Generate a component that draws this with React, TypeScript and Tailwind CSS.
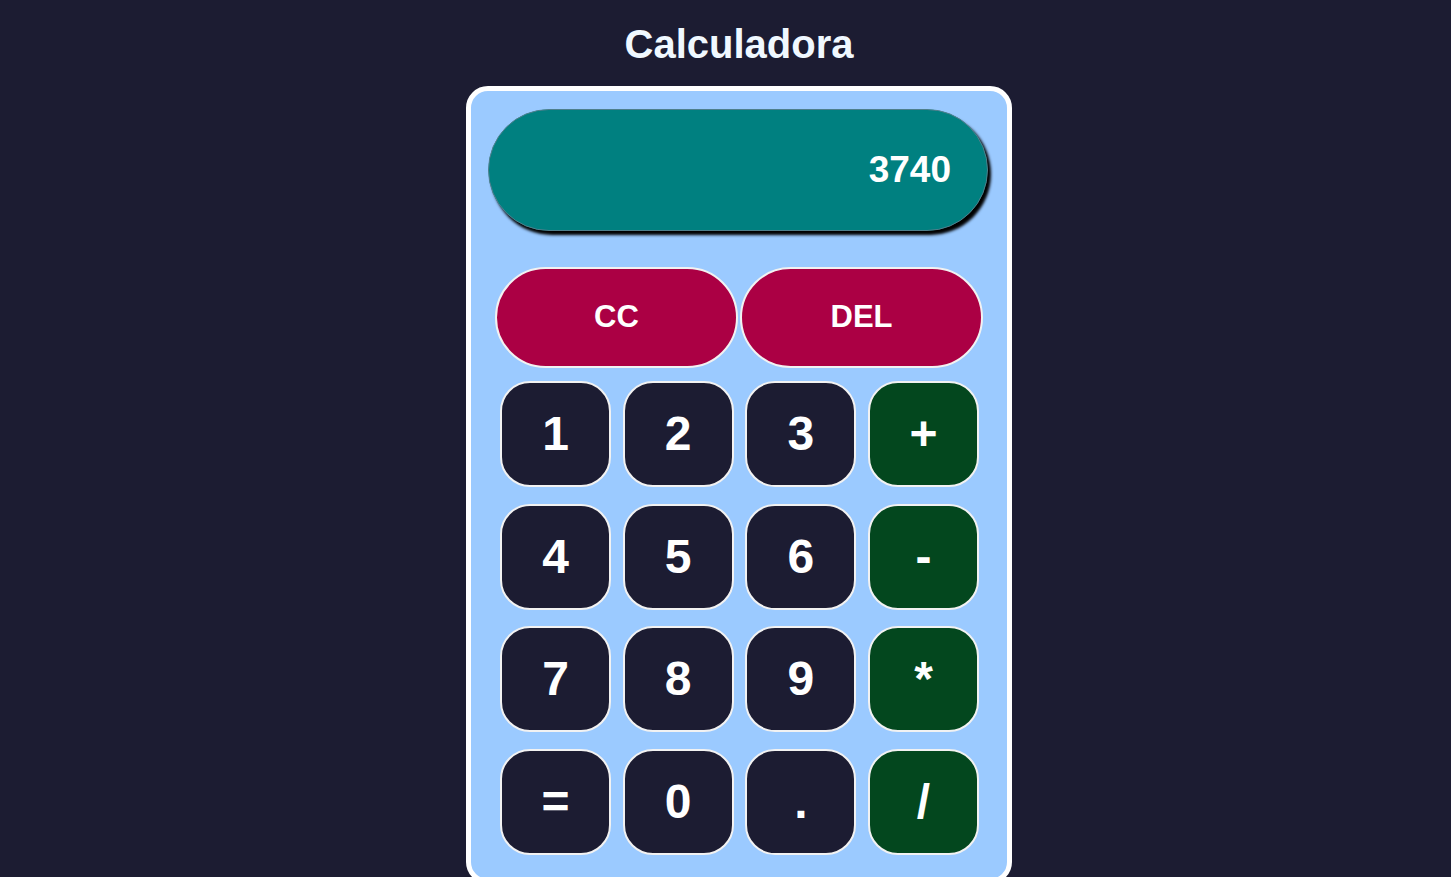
const keys = [
  { label: '1', op: false },
  { label: '2', op: false },
  { label: '3', op: false },
  { label: '+', op: true },
  { label: '4', op: false },
  { label: '5', op: false },
  { label: '6', op: false },
  { label: '-', op: true },
  { label: '7', op: false },
  { label: '8', op: false },
  { label: '9', op: false },
  { label: '*', op: true },
  { label: '=', op: false },
  { label: '0', op: false },
  { label: '.', op: false },
  { label: '/', op: true },
];

const App = () => {
  return (
    <div
      className="min-h-screen bg-[#1c1c32] flex flex-col items-center pl-[27px]"
      style={{ fontFamily: '"Liberation Sans", Arial, sans-serif' }}
    >
      {/* Title */}
      <h1 className="pt-[21px] text-[40px] leading-[46px] font-bold text-[#f0f8ff]">
        Calculadora
      </h1>

      {/* Calculator body */}
      <div className="mt-[19px] w-[546px] border-[5px] border-white rounded-[22px] bg-[#9bcaff] pt-[18px] pl-[17px] pb-[24px]">
        {/* Display */}
        <div className="w-[500px] h-[122px] rounded-full bg-[#008080] border border-[#4e7f8c] shadow-[3px_4px_3px_#000] flex items-center justify-end pr-[36px]">
          <span className="text-[37px] font-bold text-white">3740</span>
        </div>

        {/* Clear / delete */}
        <div className="mt-[36px] ml-[7px] flex gap-[2px]">
          <button className="w-[243px] h-[101px] shrink-0 rounded-full bg-[#ab0044] border-2 border-[#f2f2f2] text-white text-[31px] font-bold">
            CC
          </button>
          <button className="w-[243px] h-[101px] shrink-0 rounded-full bg-[#ab0044] border-2 border-[#f2f2f2] text-white text-[31px] font-bold">
            DEL
          </button>
        </div>

        {/* Keypad */}
        <div className="mt-[13px] ml-[12px] grid grid-cols-[repeat(4,111px)] gap-x-[11.67px] gap-y-[16.67px]">
          {keys.map((k) => (
            <button
              key={k.label}
              className={
                k.op
                  ? 'h-[106px] rounded-[30px] bg-[#03471e] border-2 border-[#f2f2f2] text-white text-[48px] font-bold'
                  : 'h-[106px] rounded-[30px] bg-[#1c1c32] border-2 border-[#f2f2f2] text-white text-[48px] font-bold'
              }
            >
              {k.label}
            </button>
          ))}
        </div>
      </div>
    </div>
  );
};

export default App;
